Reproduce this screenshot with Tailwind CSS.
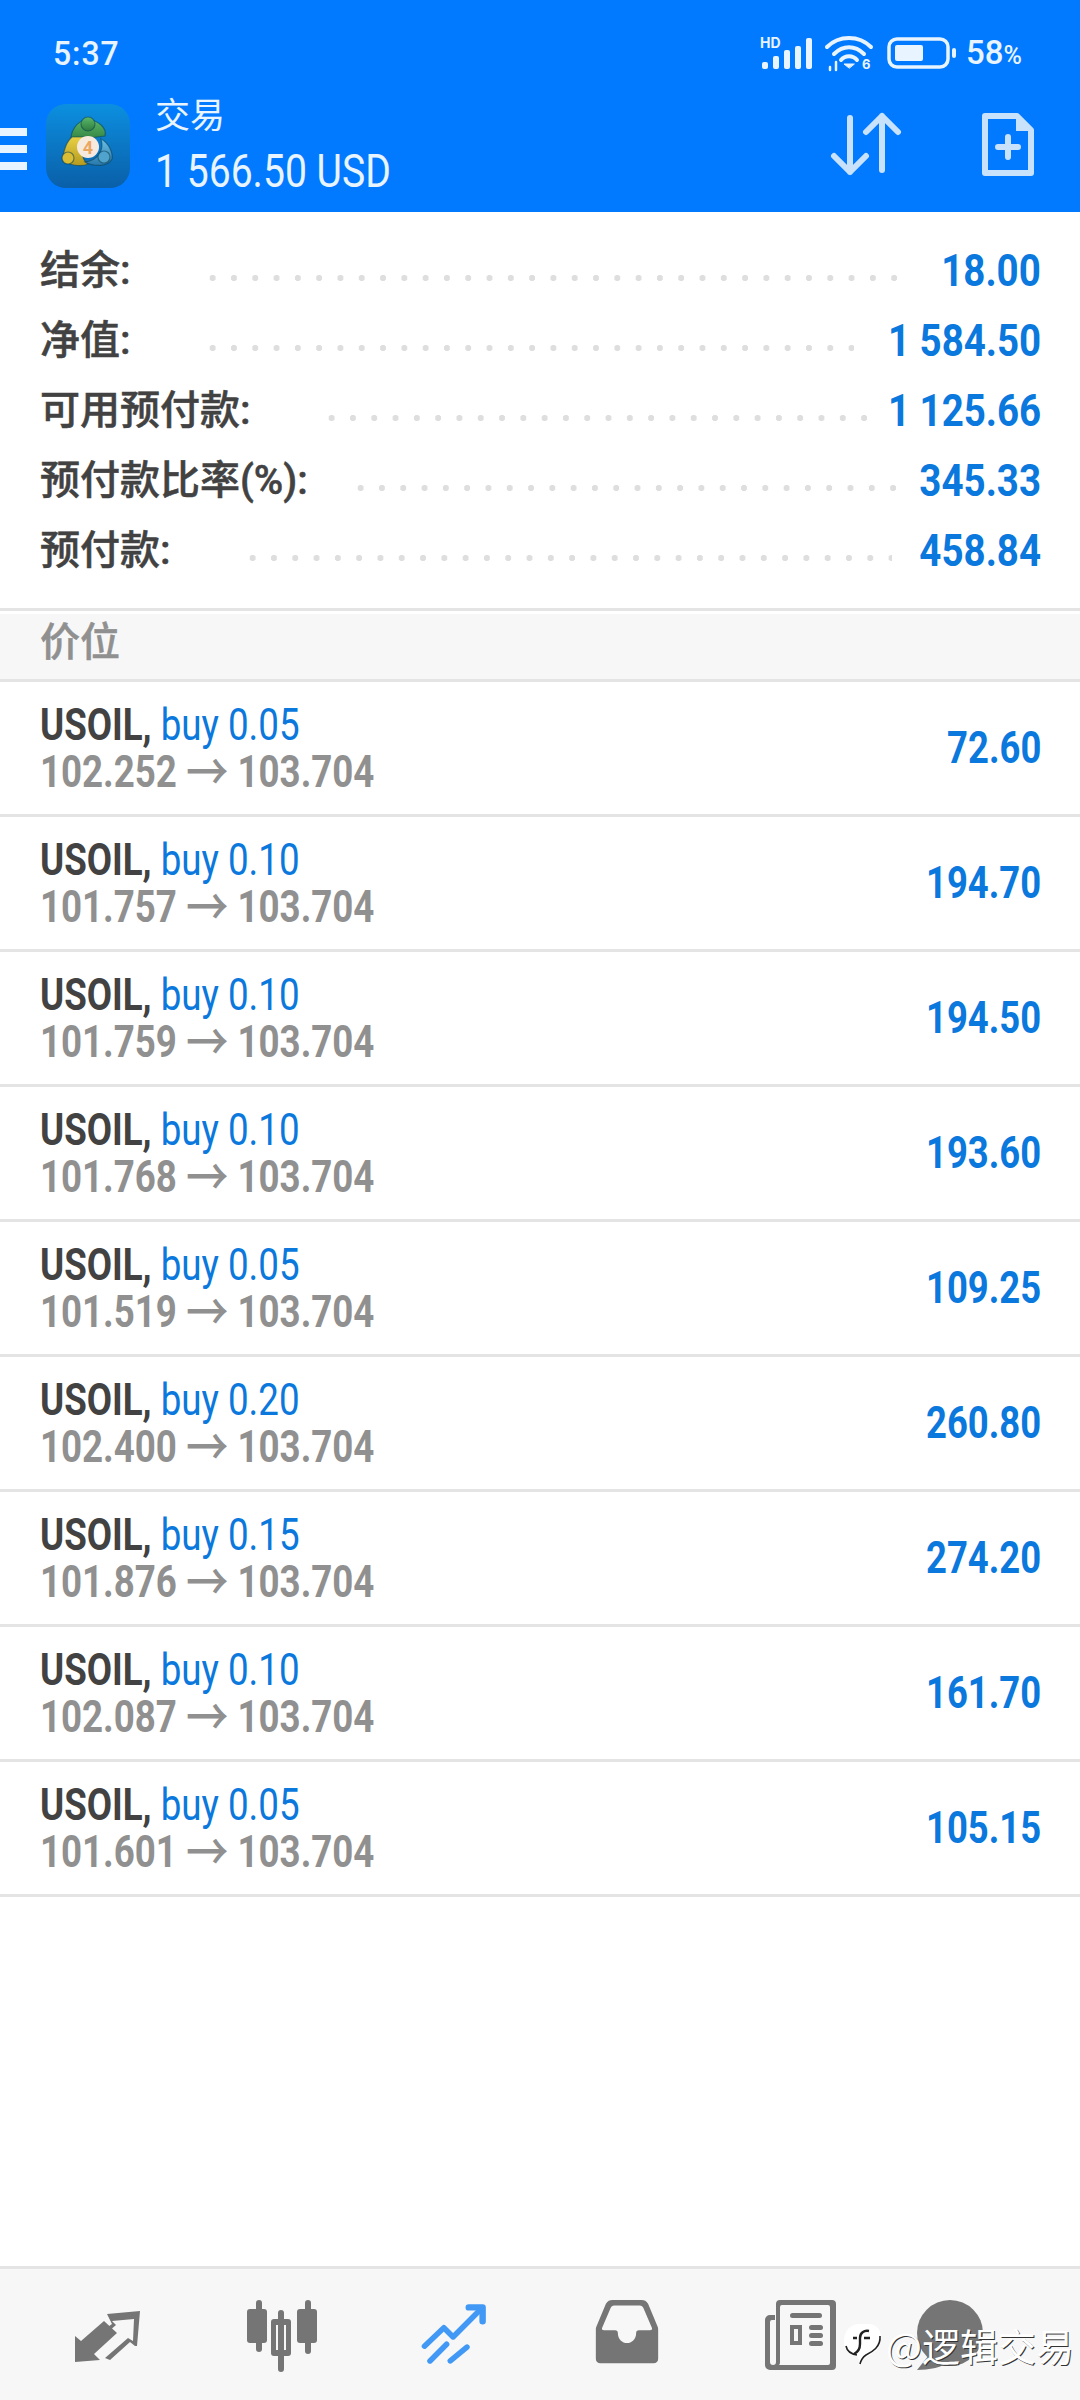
<!DOCTYPE html>
<html lang="zh">
<head>
<meta charset="utf-8">
<script src="https://cdn.jsdelivr.net/npm/@tailwindcss/browser@4"></script>
</head>
<body class="bg-white">
<div class="relative w-[1080px] h-[2400px] flex flex-col bg-white overflow-hidden font-['Roboto','Noto_Sans_CJK_SC',sans-serif] text-[#424242]">

  <!-- blue app bar -->
  <header class="h-[212px] shrink-0 bg-[#027aff] text-[#e8f4ff] flex flex-col">
    <div class="h-[100px] flex items-center pl-[53px] pr-[58px] pt-[6px]">
      <span class="text-[34px] font-medium origin-left scale-x-[0.94] tracking-[1px]">5:37</span>
      <div class="ml-auto flex items-center">
        <svg class="w-[52px] h-[36px] overflow-visible" viewBox="0 0 52 36" fill="#e8f4ff">
          <text x="0" y="13" font-size="14" font-weight="700" font-family="Inter,sans-serif">HD</text>
          <rect x="2" y="27" width="6" height="7" rx="2"/><rect x="13" y="21" width="6" height="13" rx="2"/><rect x="24" y="15" width="6" height="19" rx="2"/><rect x="35" y="11" width="6" height="23" rx="2"/><rect x="46" y="3" width="6" height="31" rx="2"/>
        </svg>
        <svg class="w-[48px] h-[36px] ml-[13px] overflow-visible" viewBox="0 0 48 36" fill="none" stroke="#e8f4ff" stroke-width="4" stroke-linecap="round">
          <path d="M2 12C14 0 34 0 46 12"/><path d="M9 19C18 10 30 10 39 19"/><path d="M16 25C20 20 28 20 32 25"/>
          <path d="M24 33l-5-4h10z" fill="#e8f4ff" stroke-width="1"/>
          <path d="M5 32v3M11 27v8" stroke-width="2.5"/>
          <text x="37" y="34" font-size="13" font-weight="700" fill="#e8f4ff" stroke="none" font-family="Inter,sans-serif">6</text>
        </svg>
        <svg class="w-[70px] h-[32px] ml-[14px]" viewBox="0 0 70 32">
          <rect x="2" y="2" width="59" height="28" rx="8" fill="none" stroke="#e8f4ff" stroke-width="3.5"/>
          <rect x="8" y="8" width="28" height="16" rx="2" fill="#e8f4ff"/>
          <rect x="65" y="11" width="4" height="10" rx="2" fill="#e8f4ff"/>
        </svg>
        <span class="ml-[9px] text-[33px] font-medium">58<span class="text-[25px]">%</span></span>
      </div>
    </div>
    <div class="flex-1 flex items-start relative">
      <div class="w-[27px] mt-[28px] flex flex-col gap-[9px]">
        <div class="h-[8px] bg-[#e8f4ff]"></div><div class="h-[8px] bg-[#e8f4ff]"></div><div class="h-[8px] bg-[#e8f4ff]"></div>
      </div>
      <svg class="w-[84px] h-[84px] ml-[19px] mt-[4px]" viewBox="0 0 84 84">
        <defs>
          <linearGradient id="lg" x1="0" y1="0" x2="0" y2="1"><stop offset="0" stop-color="#0c8fe0"/><stop offset="1" stop-color="#0a5fa8"/></linearGradient>
          <linearGradient id="g1" x1="0" y1="0" x2="0" y2="1"><stop offset="0" stop-color="#5cb86a"/><stop offset="1" stop-color="#2d7d3e"/></linearGradient>
          <linearGradient id="g2" x1="0" y1="0" x2="0" y2="1"><stop offset="0" stop-color="#e8d044"/><stop offset="1" stop-color="#b59a1f"/></linearGradient>
          <linearGradient id="g3" x1="0" y1="0" x2="0" y2="1"><stop offset="0" stop-color="#6cc0e4"/><stop offset="1" stop-color="#2878ac"/></linearGradient>
        </defs>
        <rect width="84" height="84" rx="20" fill="url(#lg)"/>
        <g stroke="#0b3f52" stroke-opacity="0.55" stroke-width="1.2">
          <path d="M42 15c-12 2-18 13-17 23l18-4 16-2c2-8-6-15-17-17z" fill="url(#g1)"/>
          <circle cx="42" cy="20" r="7" fill="url(#g1)"/>
          <path d="M26 33c-5 4-9 14-9 22 5 7 19 8 25 5-8-5-7-20-3-27z" fill="url(#g2)"/>
          <circle cx="22" cy="54" r="6" fill="#d8bd35"/>
          <path d="M55 35c8 4 12 14 11 20-4 8-18 8-27 3 10-1 20-9 16-23z" fill="url(#g3)"/>
          <circle cx="58" cy="53" r="6" fill="#4fa3cc"/>
        </g>
        <circle cx="42" cy="43" r="11" fill="#f6eadf"/>
        <text x="42" y="50" text-anchor="middle" font-size="18" font-weight="700" fill="#eba65f" font-family="Roboto,sans-serif">4</text>
      </svg>
      <div class="ml-[25px] flex flex-col">
        <span class="text-[35px] leading-[40px] mt-[-3px]">交易</span>
        <span class="text-[47px] leading-[50px] mt-[9px] origin-left scale-x-[0.832] whitespace-nowrap">1 566.50 USD</span>
      </div>
      <svg class="absolute left-[830px] top-[12px] w-[72px] h-[64px]" viewBox="0 0 72 64" fill="none" stroke="#c9e2fb" stroke-width="6" stroke-linecap="round" stroke-linejoin="round">
        <path d="M20 6v54M4 44l16 16 16-16"/><path d="M52 58V4M36 20L52 4l16 16"/>
      </svg>
      <svg class="absolute left-[982px] top-[13px] w-[52px] h-[63px]" viewBox="0 0 52 63" fill="none">
        <path d="M3 3h32l14 14v43H3z" stroke="#c9e2fb" stroke-width="6" stroke-linejoin="round"/>
        <path d="M34 2l16 16H34z" fill="#c9e2fb"/>
        <path d="M26 24v20M16 34h20" stroke="#c9e2fb" stroke-width="6" stroke-linecap="round"/>
      </svg>
    </div>
  </header>

  <!-- account summary -->
  <section class="h-[399px] shrink-0 pt-[24px] pl-[40px] pr-[39px] text-[40px] border-b-[3px] border-[#e4e4e4]">
    <div class="h-[70px] flex items-center whitespace-nowrap"><span class="shrink-0 font-medium [-webkit-text-stroke:0.5px_#424242]">结余:</span><div class="ml-[71px] mr-[-40px] w-[696px] shrink-0 h-[6px] mt-[14px] bg-[radial-gradient(circle,#dedede_2.8px,transparent_3.4px)] bg-[length:21.3px_6px]"></div><span class="ml-auto shrink-0 font-bold text-[#0a78dc] text-[44px] origin-right scale-x-[0.875]">18.00</span></div>
    <div class="h-[70px] flex items-center whitespace-nowrap"><span class="shrink-0 font-medium [-webkit-text-stroke:0.5px_#424242]">净值:</span><div class="ml-[71px] mr-[-40px] w-[652px] shrink-0 h-[6px] mt-[14px] bg-[radial-gradient(circle,#dedede_2.8px,transparent_3.4px)] bg-[length:21.3px_6px]"></div><span class="ml-auto shrink-0 font-bold text-[#0a78dc] text-[44px] origin-right scale-x-[0.875]">1 584.50</span></div>
    <div class="h-[70px] flex items-center whitespace-nowrap"><span class="shrink-0 font-medium [-webkit-text-stroke:0.5px_#424242]">可用预付款:</span><div class="ml-[70px] mr-[-40px] w-[553px] shrink-0 h-[6px] mt-[14px] bg-[radial-gradient(circle,#dedede_2.8px,transparent_3.4px)] bg-[length:21.3px_6px]"></div><span class="ml-auto shrink-0 font-bold text-[#0a78dc] text-[44px] origin-right scale-x-[0.875]">1 125.66</span></div>
    <div class="h-[70px] flex items-center whitespace-nowrap"><span class="shrink-0 font-medium [-webkit-text-stroke:0.5px_#424242]">预付款比率(%):</span><div class="ml-[42px] mr-[-40px] w-[557px] shrink-0 h-[6px] mt-[14px] bg-[radial-gradient(circle,#dedede_2.8px,transparent_3.4px)] bg-[length:21.3px_6px]"></div><span class="ml-auto shrink-0 font-bold text-[#0a78dc] text-[44px] origin-right scale-x-[0.875]">345.33</span></div>
    <div class="h-[70px] flex items-center whitespace-nowrap"><span class="shrink-0 font-medium [-webkit-text-stroke:0.5px_#424242]">预付款:</span><div class="ml-[71px] mr-[-40px] w-[650px] shrink-0 h-[6px] mt-[14px] bg-[radial-gradient(circle,#dedede_2.8px,transparent_3.4px)] bg-[length:21.3px_6px]"></div><span class="ml-auto shrink-0 font-bold text-[#0a78dc] text-[44px] origin-right scale-x-[0.875]">458.84</span></div>
  </section>

  <!-- section title -->
  <div class="h-[68px] shrink-0 mt-[3px] bg-[#f7f7f7] border-b-[3px] border-[#e4e4e4] pl-[40px] pb-[8px] flex items-center text-[40px] font-medium [-webkit-text-stroke:0.5px_#909090] text-[#909090]">价位</div>

  <!-- positions -->
  <main class="flex-1">
    <div class="h-[135px] border-b-[3px] border-[#e4e4e4] pl-[40px] pr-[39px] flex items-center"><div class="flex-1 flex flex-col origin-left scale-x-[0.815] text-[45px] leading-[47px] whitespace-nowrap"><div><b class="font-bold">USOIL,</b> <span class="text-[#0a78dc]">buy 0.05</span></div><div class="font-bold text-[#909090]">102.252 <span class="font-medium text-[52px] leading-[0] align-[-4px]">→</span> 103.704</div></div><span class="font-bold text-[#0a78dc] text-[45px] origin-right scale-x-[0.81]">72.60</span></div>
    <div class="h-[135px] border-b-[3px] border-[#e4e4e4] pl-[40px] pr-[39px] flex items-center"><div class="flex-1 flex flex-col origin-left scale-x-[0.815] text-[45px] leading-[47px] whitespace-nowrap"><div><b class="font-bold">USOIL,</b> <span class="text-[#0a78dc]">buy 0.10</span></div><div class="font-bold text-[#909090]">101.757 <span class="font-medium text-[52px] leading-[0] align-[-4px]">→</span> 103.704</div></div><span class="font-bold text-[#0a78dc] text-[45px] origin-right scale-x-[0.81]">194.70</span></div>
    <div class="h-[135px] border-b-[3px] border-[#e4e4e4] pl-[40px] pr-[39px] flex items-center"><div class="flex-1 flex flex-col origin-left scale-x-[0.815] text-[45px] leading-[47px] whitespace-nowrap"><div><b class="font-bold">USOIL,</b> <span class="text-[#0a78dc]">buy 0.10</span></div><div class="font-bold text-[#909090]">101.759 <span class="font-medium text-[52px] leading-[0] align-[-4px]">→</span> 103.704</div></div><span class="font-bold text-[#0a78dc] text-[45px] origin-right scale-x-[0.81]">194.50</span></div>
    <div class="h-[135px] border-b-[3px] border-[#e4e4e4] pl-[40px] pr-[39px] flex items-center"><div class="flex-1 flex flex-col origin-left scale-x-[0.815] text-[45px] leading-[47px] whitespace-nowrap"><div><b class="font-bold">USOIL,</b> <span class="text-[#0a78dc]">buy 0.10</span></div><div class="font-bold text-[#909090]">101.768 <span class="font-medium text-[52px] leading-[0] align-[-4px]">→</span> 103.704</div></div><span class="font-bold text-[#0a78dc] text-[45px] origin-right scale-x-[0.81]">193.60</span></div>
    <div class="h-[135px] border-b-[3px] border-[#e4e4e4] pl-[40px] pr-[39px] flex items-center"><div class="flex-1 flex flex-col origin-left scale-x-[0.815] text-[45px] leading-[47px] whitespace-nowrap"><div><b class="font-bold">USOIL,</b> <span class="text-[#0a78dc]">buy 0.05</span></div><div class="font-bold text-[#909090]">101.519 <span class="font-medium text-[52px] leading-[0] align-[-4px]">→</span> 103.704</div></div><span class="font-bold text-[#0a78dc] text-[45px] origin-right scale-x-[0.81]">109.25</span></div>
    <div class="h-[135px] border-b-[3px] border-[#e4e4e4] pl-[40px] pr-[39px] flex items-center"><div class="flex-1 flex flex-col origin-left scale-x-[0.815] text-[45px] leading-[47px] whitespace-nowrap"><div><b class="font-bold">USOIL,</b> <span class="text-[#0a78dc]">buy 0.20</span></div><div class="font-bold text-[#909090]">102.400 <span class="font-medium text-[52px] leading-[0] align-[-4px]">→</span> 103.704</div></div><span class="font-bold text-[#0a78dc] text-[45px] origin-right scale-x-[0.81]">260.80</span></div>
    <div class="h-[135px] border-b-[3px] border-[#e4e4e4] pl-[40px] pr-[39px] flex items-center"><div class="flex-1 flex flex-col origin-left scale-x-[0.815] text-[45px] leading-[47px] whitespace-nowrap"><div><b class="font-bold">USOIL,</b> <span class="text-[#0a78dc]">buy 0.15</span></div><div class="font-bold text-[#909090]">101.876 <span class="font-medium text-[52px] leading-[0] align-[-4px]">→</span> 103.704</div></div><span class="font-bold text-[#0a78dc] text-[45px] origin-right scale-x-[0.81]">274.20</span></div>
    <div class="h-[135px] border-b-[3px] border-[#e4e4e4] pl-[40px] pr-[39px] flex items-center"><div class="flex-1 flex flex-col origin-left scale-x-[0.815] text-[45px] leading-[47px] whitespace-nowrap"><div><b class="font-bold">USOIL,</b> <span class="text-[#0a78dc]">buy 0.10</span></div><div class="font-bold text-[#909090]">102.087 <span class="font-medium text-[52px] leading-[0] align-[-4px]">→</span> 103.704</div></div><span class="font-bold text-[#0a78dc] text-[45px] origin-right scale-x-[0.81]">161.70</span></div>
    <div class="h-[135px] border-b-[3px] border-[#e4e4e4] pl-[40px] pr-[39px] flex items-center"><div class="flex-1 flex flex-col origin-left scale-x-[0.815] text-[45px] leading-[47px] whitespace-nowrap"><div><b class="font-bold">USOIL,</b> <span class="text-[#0a78dc]">buy 0.05</span></div><div class="font-bold text-[#909090]">101.601 <span class="font-medium text-[52px] leading-[0] align-[-4px]">→</span> 103.704</div></div><span class="font-bold text-[#0a78dc] text-[45px] origin-right scale-x-[0.81]">105.15</span></div>
  </main>

  <!-- bottom tabs -->
  <nav class="h-[134px] shrink-0 bg-[#f7f7f7] border-t-[3px] border-[#e4e4e4] flex items-start pl-[72px] pt-[31px] gap-[101px]">
    <svg class="w-[72px] h-[72px]" viewBox="0 0 72 72" fill="#757575">
      <path d="M3 62V36l6 5 23-20 13 12-23 21 6 6z"/>
      <path d="M35 14l33-3-3 35-2 0-5-4-20 18-5-2 23-20 5 3 1-22-22 2 4 4-8 7-3-3 7-5z"/>
    </svg>
    <svg class="w-[72px] h-[72px]" viewBox="0 0 72 72" fill="#757575">
      <rect x="11" y="0" width="6" height="52" rx="3"/><rect x="2" y="9" width="20" height="34" rx="3"/>
      <rect x="33" y="10" width="6" height="62" rx="3"/><path d="M29 19h14a3 3 0 0 1 3 3v31a3 3 0 0 1-3 3H29a3 3 0 0 1-3-3V22a3 3 0 0 1 3-3zm2 6v25h10V25z" fill-rule="evenodd"/>
      <rect x="60" y="0" width="6" height="54" rx="3"/><rect x="52" y="9" width="20" height="34" rx="3"/>
    </svg>
    <svg class="w-[72px] h-[72px]" viewBox="-3 -3 78 78" fill="none" stroke="#4299f5" stroke-width="6" stroke-linecap="round" stroke-linejoin="round">
      <path d="M4 47l21-20 10 10L66 6"/><path d="M52 5h15v15" stroke-width="7"/><path d="M10 63l18-18M32 63l18-15"/>
    </svg>
    <svg class="w-[72px] h-[66px]" viewBox="0 0 72 72" fill="#757575">
      <path d="M20 0h32c3 0 5 1 7 4l10 24c1 2 1 3 1 5v31c0 3-2 5-5 5H7c-3 0-5-2-5-5V33c0-2 0-3 1-5L13 4c2-3 4-4 7-4zm2 6c-2 0-3 1-4 3l-9 21c-1 2 0 3 2 3h12c2 0 3 1 3 3 0 7 5 11 10 11s10-4 10-11c0-2 1-3 3-3h12c2 0 3-1 2-3L54 9c-1-2-2-3-4-3z" fill-rule="evenodd"/>
    </svg>
    <svg class="w-[72px] h-[72px]" viewBox="0 0 72 72" fill="#757575">
      <path d="M20 0h48a4 4 0 0 1 4 4v62a4 4 0 0 1-4 4H6a5 5 0 0 1-5-5V20a5 5 0 0 1 5-5h5v5H8a2 2 0 0 0-2 2v40a3 3 0 0 0 6 0V4a4 4 0 0 1 4-4zm-2 5a2 2 0 0 0-2 2v54c0 2 0 3-1 4h49a2 2 0 0 0 2-2V7a2 2 0 0 0-2-2z" fill-rule="evenodd"/>
      <rect x="26" y="13" width="32" height="5" rx="2.5"/>
      <path d="M26 25h12v20H26zm4 4v12h4V29z" fill-rule="evenodd"/>
      <rect x="45" y="25" width="14" height="5" rx="2.5"/><rect x="45" y="33" width="14" height="5" rx="2.5"/><rect x="45" y="41" width="14" height="5" rx="2.5"/>
    </svg>
    <svg class="w-[66px] h-[70px] ml-[-20px]" viewBox="0 0 66 70" fill="#757575">
      <circle cx="33" cy="33" r="33"/><path d="M12 55L0 70c12 0 26-3 32-8z"/>
    </svg>
  </nav>

  <!-- watermark over the tab bar -->
  <div class="absolute left-[844px] top-[2322px] flex items-center text-[38px] leading-[46px] text-white [text-shadow:1px_1px_0_#333] whitespace-nowrap font-['Noto_Sans_CJK_SC',sans-serif]">
    <svg class="w-[38px] h-[46px] mr-[4px]" viewBox="0 0 38 46">
      <path d="M16 2h8c9 0 13 6 13 14 0 12-9 16-15 19-3 2-5 5-7 8 0-4 0-7-2-9-6 0-13-4-13-15C0 9 6 2 16 2z" fill="#fff"/>
      <path d="M36 14c1 11-8 16-14 19-3 2-5 5-6 9M2 24c1 5 5 8 11 9" fill="none" stroke="#222" stroke-width="1.6"/>
      <path d="M25 9c-5-1-9 2-9 7v6M9 16h4M20 16h6M16 22c0 5-2 8-6 10" fill="none" stroke="#222" stroke-width="2.4"/>
    </svg>
    <span>@逻辑交易</span>
  </div>
</div>
</body>
</html>
